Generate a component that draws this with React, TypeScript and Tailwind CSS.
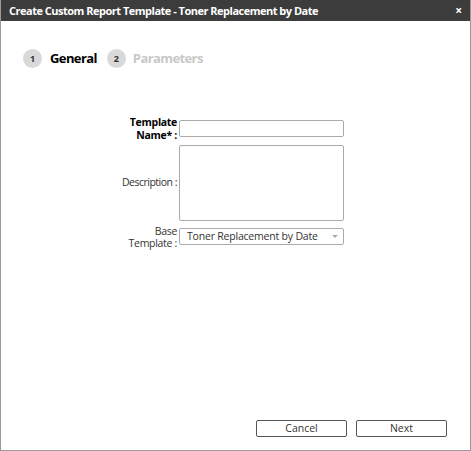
export default function App() {
  const font = { fontFamily: '"Open Sans", "Noto Sans", sans-serif' };
  return (
    <div className="w-[471px] h-[451px] bg-white border border-[#9a9a9a] border-t-0 flex flex-col" style={font}>
      {/* title bar */}
      <div className="h-[21px] bg-[#3c3c3c] flex items-center justify-between pl-[8px] pr-[8px] text-white">
        <span className="text-[11px] font-bold tracking-[-0.5px] leading-none">
          Create Custom Report Template - Toner Replacement by Date
        </span>
        <span className="text-[12px] font-bold leading-none">×</span>
      </div>

      {/* steps */}
      <div className="flex items-center mt-[28px] ml-[22px]">
        <div className="w-[19px] h-[19px] rounded-full bg-[#d9d9d9] flex items-center justify-center text-[9px] font-bold text-[#333]">1</div>
        <span className="ml-[8px] text-[13px] font-bold text-black tracking-[-0.6px]">General</span>
        <div className="ml-[10px] w-[19px] h-[19px] rounded-full bg-[#d9d9d9] flex items-center justify-center text-[9px] font-bold text-[#333]">2</div>
        <span className="ml-[7px] text-[13px] font-bold text-[#c8c8c8] tracking-[-0.6px]">Parameters</span>
      </div>

      {/* form */}
      <div className="flex flex-col ml-[120px] mt-[47px] text-[10.5px] text-[#333]">
        <div className="flex items-center">
          <label className="w-[56px] text-right font-bold text-black leading-[13px] tracking-[-0.3px]">Template Name* :</label>
          <input className="ml-[2px] w-[165px] h-[17px] border border-[#aaa] rounded-[2px] outline-none" />
        </div>
        <div className="flex items-center mt-[3px]">
          <label className="w-[56px] text-right leading-[13px] tracking-[-0.5px] whitespace-nowrap">Description :</label>
          <textarea className="ml-[2px] w-[165px] h-[76px] border border-[#aaa] rounded-[2px] outline-none resize-none" />
        </div>
        <div className="flex items-center mt-[4px]">
          <label className="w-[56px] text-right leading-[12px] tracking-[-0.3px]">Base Template :</label>
          <div className="ml-[2px] w-[165px] h-[17px] border border-[#aaa] rounded-[2px] flex items-center justify-between pl-[7px] pr-[5px]">
            <span className="text-[10.5px] text-[#333] tracking-[-0.2px]">Toner Replacement by Date</span>
            <span className="w-0 h-0 border-l-[3px] border-r-[3px] border-t-[3px] border-l-transparent border-r-transparent border-t-[#aaa]" />
          </div>
        </div>
      </div>

      <div className="flex-1" />

      {/* buttons */}
      <div className="flex justify-end gap-[9px] pr-[23px] pb-[13px] text-[10.5px] text-[#333]">
        <button className="w-[91px] h-[17px] border border-[#555] rounded-[2px] bg-white leading-none">Cancel</button>
        <button className="w-[91px] h-[17px] border border-[#555] rounded-[2px] bg-white leading-none">Next</button>
      </div>
    </div>
  );
}
